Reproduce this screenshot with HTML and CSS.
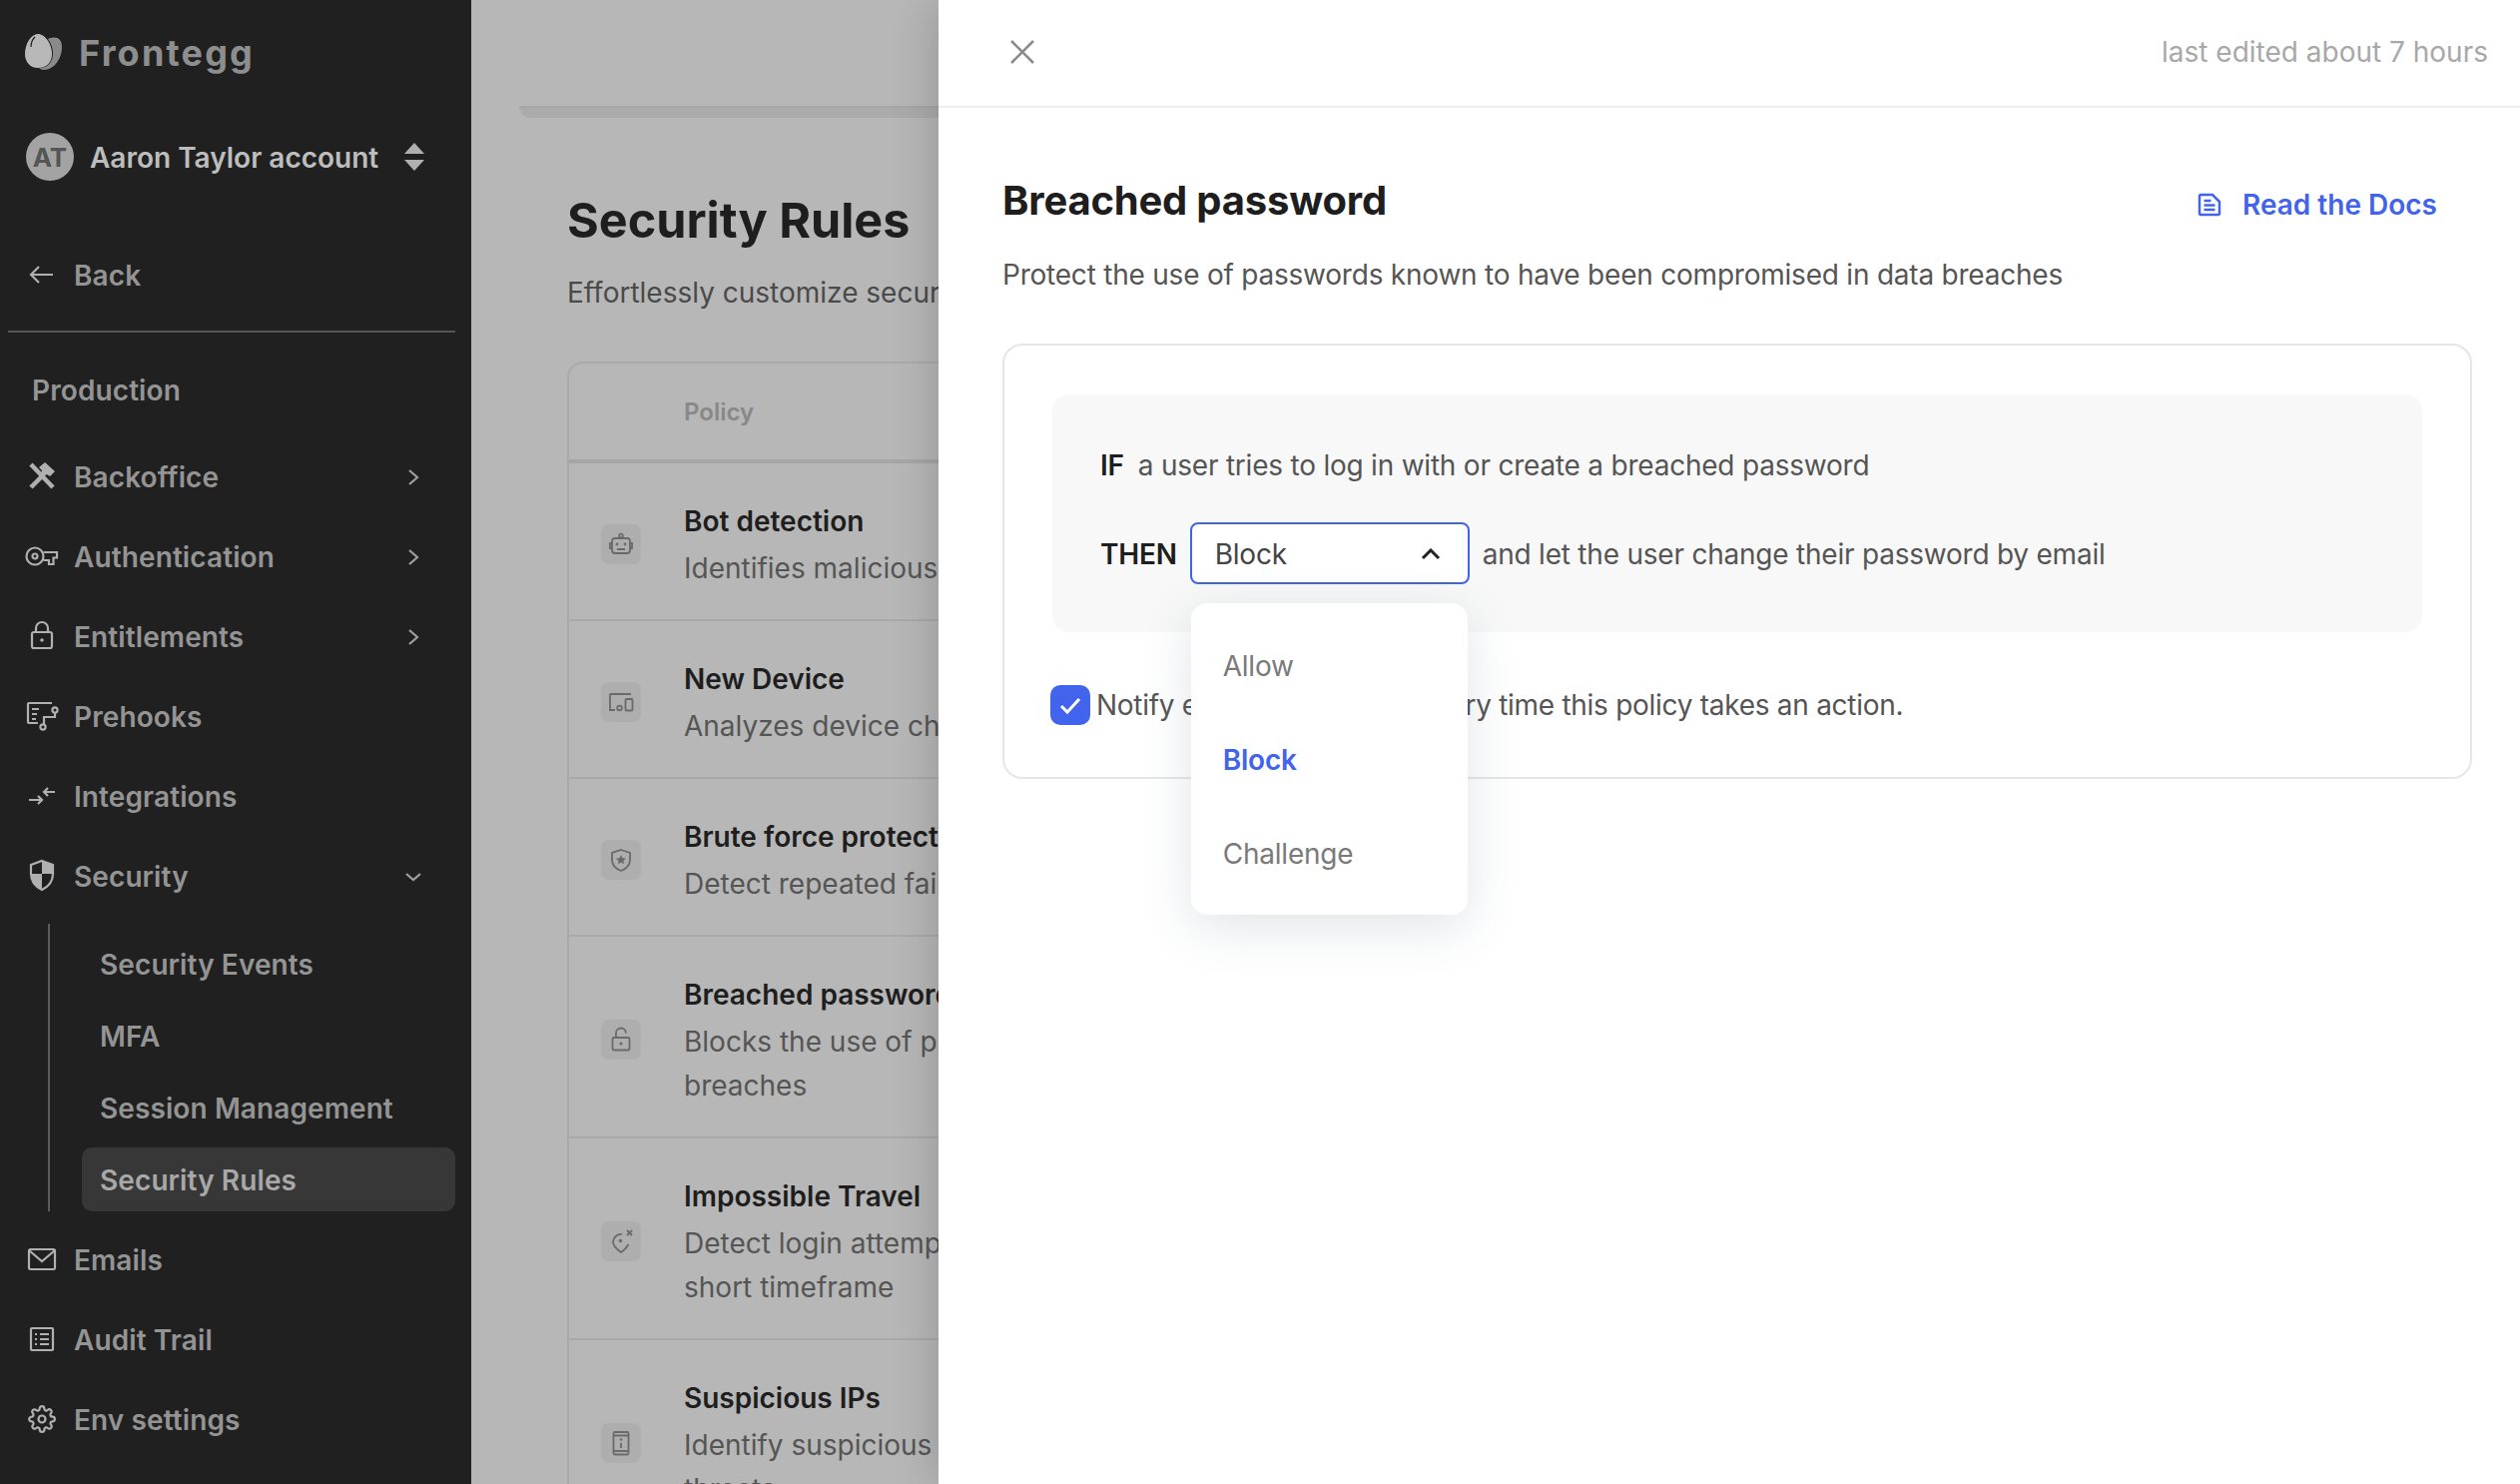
FILE: index.html
```html
<!DOCTYPE html>
<html lang="en">

<head>
    <meta charset="UTF-8">
    <title>Security Rules</title>
    <link rel="stylesheet" href="styles.css">
</head>

<body>
    <div class="page">
        <aside class="sidebar">
            <div class="brand">
                <svg class="logo" viewBox="0 0 40 38" width="40" height="38">
                    <path fill="#8a8a8a" d="M24 6c7-3 14-2 14 8 0 12-8 23-18 23-2 0-4-1-5-2 9 0 14-6 14-15 0-5-2-10-5-14z"/>
                    <path fill="#b8b8b8" d="M14 1c7 0 14 10 14 20 0 9-6 14-14 14S1 29 1 21C1 11 7 1 14 1z"/>
                    <path fill="none" stroke="#202020" stroke-width="1.2" d="M11 4c-2 2-4 6-4 10"/>
                </svg>
                <span class="brand-name">Frontegg</span>
            </div>
            <div class="account">
                <span class="avatar">AT</span>
                <span class="account-name">Aaron Taylor account</span>
                <svg class="sorter" viewBox="0 0 22 30" width="22" height="30">
                    <path fill="#b0b0b0" d="M11 1l10 11H1zM1 18h20L11 29z"/>
                </svg>
            </div>
            <a class="back">
                <svg viewBox="0 0 36 36" width="36" height="36" class="ico"><path d="M29 18H8M15 10l-8 8 8 8"/></svg>
                Back
            </a>
            <div class="divider"></div>
            <div class="env">Production</div>
            <nav class="nav">
                <a class="nav-row">
                    <svg viewBox="0 0 36 36" width="36" height="36" class="ico"><path stroke-width="4.5" d="M7 6l22 23M7 29l13-13"/><path class="solid" d="M15 9l6-5 10 9-5 5-3-2-3 2-3-3 1-3z"/></svg>
                    Backoffice
                    <svg class="chev" viewBox="0 0 24 24" width="24" height="24"><path d="M8 5l8 7-8 7"/></svg>
                </a>
                <a class="nav-row">
                    <svg viewBox="0 0 36 36" width="36" height="36" class="ico"><circle cx="11" cy="18" r="8.5"/><circle cx="11" cy="18" r="2.5"/><path d="M19.5 14H33v5.5h-3.5V26H25v-4h-5.5"/></svg>
                    Authentication
                    <svg class="chev" viewBox="0 0 24 24" width="24" height="24"><path d="M8 5l8 7-8 7"/></svg>
                </a>
                <a class="nav-row">
                    <svg viewBox="0 0 36 36" width="36" height="36" class="ico"><rect x="8" y="14" width="20" height="16" rx="2"/><path d="M12 14v-4a6 6 0 0 1 12 0v4"/><circle class="solid" cx="18" cy="22" r="1.8"/></svg>
                    Entitlements
                    <svg class="chev" viewBox="0 0 24 24" width="24" height="24"><path d="M8 5l8 7-8 7"/></svg>
                </a>
                <a class="nav-row">
                    <svg viewBox="0 0 36 36" width="36" height="36" class="ico"><path d="M28 5H5a1 1 0 0 0-1 1v18a1 1 0 0 0 1 1h9M8 11h7M8 16h5M8 21h4"/><circle cx="31" cy="12" r="2.6"/><circle cx="19" cy="29" r="2.6"/><path d="M31 15v4H20v7"/></svg>
                    Prehooks
                </a>
                <a class="nav-row">
                    <svg viewBox="0 0 36 36" width="36" height="36" class="ico"><path d="M5 22h13M14 18l4 4-4 4M31 14H20M24 10l-4 4 4 4"/></svg>
                    Integrations
                </a>
                <a class="nav-row">
                    <svg viewBox="0 0 36 36" width="36" height="36" class="ico"><path d="M18 3l11 4v9c0 8-5 13-11 16-6-3-11-8-11-16V7z"/><path class="solid" d="M18 3l11 4v9H18zM7 16h11v16c-6-3-11-8-11-16z"/></svg>
                    Security
                    <svg class="chev" viewBox="0 0 24 24" width="24" height="24"><path d="M5 9l7 6 7-6"/></svg>
                </a>
            </nav>
            <div class="subnav">
                <a class="sub-row">Security Events</a>
                <a class="sub-row">MFA</a>
                <a class="sub-row">Session Management</a>
                <a class="sub-row active">Security Rules</a>
            </div>
            <nav class="nav nav-end">
                <a class="nav-row">
                    <svg viewBox="0 0 36 36" width="36" height="36" class="ico"><rect x="5" y="8" width="26" height="20" rx="1.5"/><path d="M5 9l13 11L31 9"/></svg>
                    Emails
                </a>
                <a class="nav-row">
                    <svg viewBox="0 0 36 36" width="36" height="36" class="ico"><rect x="7" y="7" width="22" height="22" rx="1"/><path d="M11 13h2M16 13h9M11 18h2M16 18h9M11 23h2M16 23h9"/></svg>
                    Audit Trail
                </a>
                <a class="nav-row">
                    <svg viewBox="0 0 24 24" width="28" height="28" class="ico ico-gear"><circle cx="12" cy="12" r="3"/><path d="M19.4 15a1.65 1.65 0 0 0 .33 1.82l.06.06a2 2 0 0 1 0 2.83 2 2 0 0 1-2.83 0l-.06-.06a1.65 1.65 0 0 0-1.82-.33 1.65 1.65 0 0 0-1 1.51V21a2 2 0 0 1-2 2 2 2 0 0 1-2-2v-.09A1.65 1.65 0 0 0 9 19.4a1.65 1.65 0 0 0-1.82.33l-.06.06a2 2 0 0 1-2.83 0 2 2 0 0 1 0-2.83l.06-.06a1.65 1.65 0 0 0 .33-1.82 1.65 1.65 0 0 0-1.51-1H3a2 2 0 0 1-2-2 2 2 0 0 1 2-2h.09A1.65 1.65 0 0 0 4.6 9a1.65 1.65 0 0 0-.33-1.82l-.06-.06a2 2 0 0 1 0-2.83 2 2 0 0 1 2.83 0l.06.06a1.65 1.65 0 0 0 1.82.33H9a1.65 1.65 0 0 0 1-1.51V3a2 2 0 0 1 2-2 2 2 0 0 1 2 2v.09a1.65 1.65 0 0 0 1 1.51 1.65 1.65 0 0 0 1.82-.33l.06-.06a2 2 0 0 1 2.83 0 2 2 0 0 1 0 2.83l-.06.06a1.65 1.65 0 0 0-.33 1.82V9a1.65 1.65 0 0 0 1.51 1H21a2 2 0 0 1 2 2 2 2 0 0 1-2 2h-.09a1.65 1.65 0 0 0-1.51 1z"/></svg>
                    Env settings
                </a>
            </nav>
        </aside>

        <main class="main">
            <div class="top-strip"></div>
            <h1 class="page-title">Security Rules</h1>
            <p class="page-sub">Effortlessly customize security policies to protect your users from threats</p>
            <div class="table">
                <div class="table-head">Policy</div>
                <div class="table-row">
                    <span class="row-icon">
                        <svg viewBox="0 0 40 40" width="40" height="40"><rect x="11" y="14" width="18" height="15" rx="3"/><path d="M11 19H9v5h2M29 19h2v5h-2M16 25h8"/><circle cx="20" cy="11.5" r="1.8"/><circle class="solid" cx="16" cy="20" r="1.4"/><circle class="solid" cx="24" cy="20" r="1.4"/></svg>
                    </span>
                    <div>
                        <div class="row-title">Bot detection</div>
                        <div class="row-desc">Identifies malicious bot activity on your application</div>
                    </div>
                </div>
                <div class="table-row">
                    <span class="row-icon">
                        <svg viewBox="0 0 40 40" width="40" height="40"><path d="M30 12H10a1 1 0 0 0-1 1v15h5"/><rect x="24.500" y="17" width="7" height="11.500" rx="1"/><circle cx="18.500" cy="26" r="2.300"/></svg>
                    </span>
                    <div>
                        <div class="row-title">New Device</div>
                        <div class="row-desc">Analyzes device characteristics to spot new logins</div>
                    </div>
                </div>
                <div class="table-row">
                    <span class="row-icon">
                        <svg viewBox="0 0 40 40" width="40" height="40"><path d="M20 10l9 3v7c0 5-4 9-9 11-5-2-9-6-9-11v-7z"/><path class="solid" d="M20 15l1.500 3.200 3.500.4-2.600 2.300.8 3.400-3.200-1.800-3.200 1.800.8-3.400-2.600-2.300 3.500-.4z"/></svg>
                    </span>
                    <div>
                        <div class="row-title">Brute force protection</div>
                        <div class="row-desc">Detect repeated failed login attempts on an account</div>
                    </div>
                </div>
                <div class="table-row">
                    <span class="row-icon">
                        <svg viewBox="0 0 40 40" width="40" height="40"><rect x="11.500" y="18" width="17" height="12.500" rx="1.500"/><path d="M15 18v-4.500a5 5 0 0 1 10 0"/><circle class="solid" cx="20" cy="24" r="1.500"/></svg>
                    </span>
                    <div>
                        <div class="row-title">Breached password</div>
                        <div class="row-desc">Blocks the use of passwords known to have been compromised in data<br>breaches</div>
                    </div>
                </div>
                <div class="table-row">
                    <span class="row-icon">
                        <svg viewBox="0 0 40 40" width="40" height="40"><path d="M21 13a8 8 0 0 0-9 8c0 4 4 7 8 10 3-2 6-5 7.500-8"/><circle class="solid" cx="19.500" cy="19.500" r="1.700"/><path d="M26 9l5 5M31 9l-5 5"/></svg>
                    </span>
                    <div>
                        <div class="row-title">Impossible Travel</div>
                        <div class="row-desc">Detect login attempts from distant locations within a<br>short timeframe</div>
                    </div>
                </div>
                <div class="table-row">
                    <span class="row-icon">
                        <svg viewBox="0 0 40 40" width="40" height="40"><rect x="12.500" y="9" width="15" height="22.500" rx="1.500"/><path d="M13 12.500h14M13 28h14M20 20v5"/><circle class="solid" cx="20" cy="16.500" r="1.200"/></svg>
                    </span>
                    <div>
                        <div class="row-title">Suspicious IPs</div>
                        <div class="row-desc">Identify suspicious IP addresses and block known<br>threats</div>
                    </div>
                </div>
            </div>
        </main>

        <section class="drawer">
            <header class="drawer-head">
                <svg class="close" viewBox="0 0 24 24" width="24" height="24"><path d="M1 1l22 22M23 1L1 23"/></svg>
                <span class="edited">last edited about 7 hours</span>
            </header>
            <div class="drawer-body">
                <div class="title-row">
                    <h2 class="drawer-title">Breached password</h2>
                    <a class="docs">
                        <svg viewBox="0 0 24 24" width="24" height="24"><path d="M2 3a2 2 0 0 1 1-1h12l7 7v12a2 2 0 0 1-1 1H3a2 2 0 0 1-1-1zM6.500 8h7M6.500 12.500h11M6.500 17h11"/></svg>
                        Read the Docs
                    </a>
                </div>
                <p class="drawer-desc">Protect the use of passwords known to have been compromised in data breaches</p>
                <div class="card">
                    <div class="rule">
                        <div class="rule-if"><b>IF</b><span>a user tries to log in with or create a breached password</span></div>
                        <div class="rule-then">
                            <b>THEN</b>
                            <div class="select-wrap">
                                <div class="select">
                                    Block
                                    <svg viewBox="0 0 20 12" width="20" height="12"><path d="M2 10l8-8 8 8"/></svg>
                                </div>
                                <ul class="menu">
                                    <li>Allow</li>
                                    <li class="selected">Block</li>
                                    <li>Challenge</li>
                                </ul>
                            </div>
                            <span>and let the user change their password by email</span>
                        </div>
                    </div>
                    <label class="notify">
                        <span class="checkbox">
                            <svg viewBox="0 0 24 24" width="24" height="24"><path d="M3 13l6 6L21 6"/></svg>
                        </span>
                        Notify end user by email every time this policy takes an action.
                    </label>
                </div>
            </div>
        </section>
    </div>
</body>

</html>
```

FILE: styles.css
```css
* {
    margin: 0;
    padding: 0;
    box-sizing: border-box;
}

html, body {
    height: 100%;
    overflow: hidden;
}

body {
    font-family: Inter, "Noto Sans", sans-serif;
    font-size: 28px;
    background-color: #b7b7b7;
}

svg {
    display: block;
    flex: none;
}

.page {
    position: relative;
    display: flex;
    height: 1486px;
    overflow: hidden;
}

/* sidebar */
.sidebar {
    width: 472px;
    flex: none;
    background-color: #202020;
    color: #949494;
    font-weight: 600;
    letter-spacing: 0.1px;
}

.brand {
    display: flex;
    align-items: center;
    gap: 15px;
    height: 104px;
    padding-left: 24px;
}

.brand-name {
    padding-top: 2px;
    font-size: 36px;
    font-weight: 700;
    letter-spacing: 2.2px;
    color: #8e8e8e;
}

.account {
    display: flex;
    align-items: center;
    height: 106px;
    padding-left: 26px;
    color: #bdbdbd;
    letter-spacing: 0;
}

.avatar {
    display: flex;
    align-items: center;
    justify-content: center;
    width: 48px;
    height: 48px;
    border-radius: 50%;
    background-color: #a3a3a3;
    color: #555;
    font-size: 26px;
    font-weight: 700;
}

.account-name {
    padding-top: 2px;
    margin-left: 16px;
    width: 314px;
    white-space: nowrap;
}

.ico {
    margin-top: -2px;
    fill: none;
    stroke: #b0b0b0;
    stroke-width: 2.200;
}

.ico-gear {
    margin: -2px 4px 0;
    stroke-width: 1.900;
}

.ico .solid,
.row-icon .solid {
    fill: #b0b0b0;
    stroke: none;
}

.back,
.nav-row {
    display: flex;
    align-items: center;
    gap: 14px;
    height: 80px;
    padding: 2px 46px 0 24px;
}

.back {
    margin-top: 25px;
}

.divider {
    height: 2px;
    width: 448px;
    margin: 16px 0 0 8px;
    background-color: #555;
}

.env {
    display: flex;
    align-items: center;
    height: 80px;
    margin-top: 17px;
    padding: 1px 0 0 32px;
}

.nav {
    margin-top: 7px;
}

.nav-end {
    margin-top: 8px;
}

.chev {
    margin-left: auto;
    fill: none;
    stroke: #a0a0a0;
    stroke-width: 2.200;
}

.subnav {
    display: flex;
    flex-direction: column;
    gap: 8px;
    width: 408px;
    margin: 8px 0 0 48px;
    padding: 8px 0 0 32px;
    border-left: 2px solid #5c5c5c;
}

.sub-row {
    display: flex;
    align-items: center;
    height: 64px;
    padding: 2px 0 0 18px;
    border-radius: 10px;
}

.sub-row.active {
    background-color: #373737;
    color: #a8a8a8;
}

/* dimmed page behind the drawer */
.main {
    flex: 1;
    min-width: 0;
    padding: 106px 48px 0;
}

.top-strip {
    height: 12px;
    border-top: 2px solid #a6a6a6;
    border-bottom-left-radius: 12px;
    background-color: #ababab;
}

.page-title {
    margin: 73px 0 0 48px;
    font-size: 48.500px;
    line-height: 60px;
    font-weight: 700;
    color: #1e1e1e;
}

.page-sub {
    margin: 20px 0 0 48px;
    line-height: 44px;
    color: #4a4a4a;
    white-space: nowrap;
}

.table {
    margin: 47px 0 0 48px;
    border: 2px solid #a9a9a9;
    border-bottom: 0;
    border-radius: 16px 16px 0 0;
}

.table-head {
    display: flex;
    align-items: center;
    height: 100px;
    padding-left: 115px;
    border-bottom: 4px solid #a6a6a8;
    font-size: 24px;
    font-weight: 600;
    color: #888;
}

.table-row {
    display: flex;
    align-items: center;
    padding: 35px 0 29px 32px;
    border-bottom: 2px solid #a9a9a9;
}

.row-icon {
    flex: none;
    width: 40px;
    height: 40px;
    margin-right: 43px;
    border-radius: 8px;
    background-color: #aeaeae;
}

.row-icon svg {
    fill: none;
    stroke: #6a6a6a;
    stroke-width: 1.800;
}

.row-icon .solid {
    fill: #6a6a6a;
}

.row-title {
    line-height: 46px;
    font-weight: 600;
    color: #1e1e1e;
}

.row-desc {
    margin-top: 2px;
    line-height: 44px;
    color: #555;
    white-space: nowrap;
}

/* drawer */
.drawer {
    position: absolute;
    top: 0;
    right: 0;
    bottom: 0;
    width: 1584px;
    background-color: #fff;
    box-shadow: -6px 0 40px rgba(0, 0, 0, 0.16);
}

.drawer-head {
    display: flex;
    align-items: center;
    justify-content: space-between;
    height: 108px;
    padding: 0 32px 3px 72px;
    border-bottom: 2px solid #f0f0f0;
}

.close {
    fill: none;
    stroke: #8a8a8a;
    stroke-width: 2.500;
}

.edited {
    color: #a8a8a8;
}

.drawer-body {
    padding: 62px 48px 0 64px;
}

.title-row {
    display: flex;
    align-items: center;
    justify-content: space-between;
    height: 60px;
}

.drawer-title {
    font-size: 40px;
    font-weight: 700;
    letter-spacing: -0.2px;
    color: #1e1e1e;
}

.docs {
    display: flex;
    align-items: center;
    gap: 21px;
    margin: 10px 35px 0 0;
    font-weight: 600;
    color: #4263eb;
}

.docs svg {
    fill: none;
    stroke: #4263eb;
    stroke-width: 2.500;
}

.drawer-desc {
    margin-top: 23px;
    line-height: 44px;
    letter-spacing: -0.22px;
    color: #555;
}

.card {
    height: 436px;
    margin-top: 47px;
    padding: 49px 48px 0;
    border: 2px solid #e6e6e6;
    border-radius: 20px;
}

.rule {
    height: 238px;
    padding: 49px 48px 0;
    border-radius: 16px;
    background-color: #f8f8f8;
    color: #555;
    letter-spacing: -0.22px;
}

.rule b {
    font-weight: 600;
    color: #1e1e1e;
}

.rule-if {
    display: flex;
    align-items: center;
    gap: 14px;
    height: 44px;
}

.rule-then {
    display: flex;
    align-items: center;
    gap: 13px;
    margin-top: 35px;
}

.rule-then > b,
.rule-then > span,
.select {
    padding-top: 2px;
}

.select-wrap {
    position: relative;
}

.select {
    display: flex;
    align-items: center;
    justify-content: space-between;
    width: 280px;
    height: 62px;
    padding-right: 27px;
    padding-left: 23px;
    border: 2px solid #4263eb;
    border-radius: 8px;
    background-color: #fff;
    color: #444;
}

.select svg {
    fill: none;
    stroke: #222;
    stroke-width: 3;
}

.menu {
    position: absolute;
    top: 81px;
    left: 1px;
    z-index: 2;
    width: 277px;
    height: 312px;
    padding-top: 16px;
    list-style: none;
    border-radius: 16px;
    background-color: #fff;
    box-shadow: 0 12px 50px rgba(60, 85, 105, 0.16);
}

.menu li {
    display: flex;
    align-items: center;
    height: 94px;
    padding-left: 32px;
    color: #7a7a7a;
}

.menu li.selected {
    font-weight: 600;
    color: #4263eb;
}

.notify {
    display: flex;
    align-items: center;
    gap: 6px;
    margin: 53px 0 0 -2px;
    letter-spacing: -0.28px;
    color: #555;
}

.checkbox {
    display: flex;
    align-items: center;
    justify-content: center;
    width: 40px;
    height: 40px;
    border-radius: 10px;
    background-color: #4263eb;
}

.checkbox svg {
    fill: none;
    stroke: #fff;
    stroke-width: 3;
}
```
